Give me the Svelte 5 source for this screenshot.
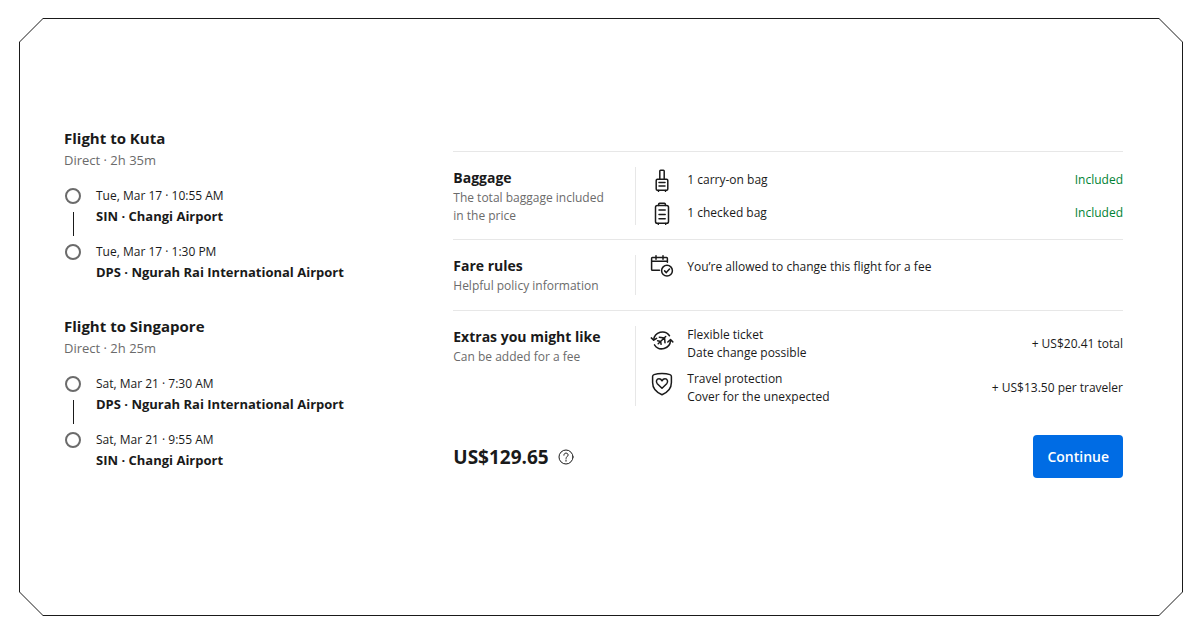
<script>
  const flights = [
    {
      title: 'Flight to Kuta',
      summary: 'Direct · 2h 35m',
      stops: [
        {time: 'Tue, Mar 17 · 10:55 AM', airport: 'SIN · Changi Airport'},
        {time: 'Tue, Mar 17 · 1:30 PM', airport: 'DPS · Ngurah Rai International Airport'}
      ]
    },
    {
      title: 'Flight to Singapore',
      summary: 'Direct · 2h 25m',
      stops: [
        {time: 'Sat, Mar 21 · 7:30 AM', airport: 'DPS · Ngurah Rai International Airport'},
        {time: 'Sat, Mar 21 · 9:55 AM', airport: 'SIN · Changi Airport'}
      ]
    }
  ];

  const sections = [
    {
      id: 'baggage',
      title: 'Baggage',
      text: 'The total baggage included in the price',
      rows: [
        {icon: 'carryon', lines: ['1 carry-on bag'], value: 'Included'},
        {icon: 'checked', lines: ['1 checked bag'], value: 'Included'}
      ]
    },
    {
      id: 'rules',
      title: 'Fare rules',
      text: 'Helpful policy information',
      rows: [
        {icon: 'calendar', lines: ['You’re allowed to change this flight for a fee']}
      ]
    },
    {
      id: 'extras',
      title: 'Extras you might like',
      text: 'Can be added for a fee',
      rows: [
        {icon: 'flexible', lines: ['Flexible ticket', 'Date change possible'], value: '+ US$20.41 total'},
        {icon: 'shield', lines: ['Travel protection', 'Cover for the unexpected'], value: '+ US$13.50 per traveler'}
      ]
    }
  ];
</script>

{#snippet icon(name)}
  <svg class="icon" viewBox="0 0 24 24" width="24" height="24" aria-hidden="true">
    {#if name === 'carryon'}
      <path d="M9.800 11V3q0-.8.8-.8h2.800q.8 0 .8.8v8" />
      <rect x="6.200" y="11.200" width="11.600" height="11" rx="1.200" />
      <path d="M9 14.500h6M9 18h6M8.500 22.500v.800M15.500 22.500v.800" />
    {:else if name === 'checked'}
      <path d="M8.700 4.500V3q0-.8.8-.8h5q.8 0 .8.8v1.500" />
      <rect x="5.500" y="4.500" width="13" height="17.700" rx="1.800" />
      <path d="M9 9h6.200M9 13.500h6.200M9 17.800h6.200M8.300 22.500v.800M15.700 22.500v.800" />
    {:else if name === 'calendar'}
      <path d="M9.500 15.300H2.400q-.8 0-.8-.8V3.400q0-.8.8-.8h14.200q.8 0 .8.8v3.800M1.600 6.200h15.800M6 .8v3.400M13 .8v3.400" />
      <circle cx="17" cy="15.700" r="5.400" />
      <path d="m14.600 15.900 1.700 1.700 3.200-3.600" />
    {:else if name === 'flexible'}
      <path d="M3.700 11.800A8.700 8.700 0 0 1 19.500 7.700M20.500 12.400A8.700 8.700 0 0 1 4.500 16.800" />
      <path d="m1.300 9.900 2.400 2.300 2.900-1.900M17.800 14l2.700-2.400 2.300 2.300" />
      <path d="m8.200 15.700 7.500-7.200M9.300 9.200l5.200.700M14.600 10l.400 4.800M7.600 12.800l3 .600M10.600 13.400l.500 2.900" />
    {:else}
      <path d="M12 1.500c3 0 5.800.4 8 1.100 1 .3 1.400.8 1.400 1.800v6.200c0 5.300-3.600 9.800-9.400 12.200-5.800-2.400-9.400-6.900-9.400-12.200V4.400c0-1 .4-1.500 1.400-1.800 2.200-.7 5-1.100 8-1.100z" />
      <path d="M12 16.200 7.300 11.700C5.500 9.700 6.600 6.800 9 6.800c1.400 0 2.400.8 3 2 .6-1.200 1.600-2 3-2 2.400 0 3.500 2.900 1.700 4.900z" />
    {/if}
  </svg>
{/snippet}

<main>
  <div class="frame">
    <div class="flights">
      {#each flights as flight}
        <section class="flight">
          <h2>{flight.title}</h2>
          <p>{flight.summary}</p>
          <ol>
            {#each flight.stops as stop, i}
              <li>
                <div class="marker">
                  <span class="dot"></span>
                  {#if i < flight.stops.length - 1}<span class="line"></span>{/if}
                </div>
                <div>
                  <div class="time">{stop.time}</div>
                  <div class="airport">{stop.airport}</div>
                </div>
              </li>
            {/each}
          </ol>
        </section>
      {/each}
    </div>

    <div class="details">
      {#each sections as section}
        <section class="section {section.id}">
          <div class="intro">
            <h3>{section.title}</h3>
            <p>{section.text}</p>
          </div>
          <ul>
            {#each section.rows as row}
              <li>
                {@render icon(row.icon)}
                <div class="label">
                  {#each row.lines as line}<div>{line}</div>{/each}
                </div>
                {#if row.value}<div class="value">{row.value}</div>{/if}
              </li>
            {/each}
          </ul>
        </section>
      {/each}

      <div class="footer">
        <strong>US$129.65</strong>
        <button class="help" aria-label="Price details">
          <svg viewBox="0 0 16 16" width="16" height="16" aria-hidden="true">
            <circle cx="8" cy="8" r="7" />
            <path d="M5.900 6.200c0-1.300.9-2.100 2.100-2.100s2.100.8 2.100 1.900c0 1.500-2.100 1.700-2.100 3.400M8 11v1.200" />
          </svg>
        </button>
        <button class="continue">Continue</button>
      </div>
    </div>
  </div>
</main>

<style>
  :global(body) {
    margin: 0;
    background: #fff;
  }

  main {
    display: flex;
    box-sizing: border-box;
    min-height: 100vh;
    padding: 18px 19px 19px 19px;
    font-family: "Segoe UI", "Open Sans", sans-serif;
    font-size: 12px;
    line-height: 18px;
    color: #1a1a1a;
  }

  h2, h3, p, ol, ul {
    margin: 0;
    padding: 0;
    list-style: none;
  }

  /* cut corners: dark shape with a white one laid inside it */
  .frame {
    --cut: 24px;
    position: relative;
    z-index: 0;
    flex: 1;
    display: grid;
    grid-template-columns: 6fr 11fr;
    column-gap: 24px;
    align-items: start;
    padding: 110px 60px 110px 45px;
    background: #1a1a1a;
  }

  .frame::before {
    --cut: 23px;
    content: '';
    position: absolute;
    inset: 1px;
    z-index: -1;
    background: #fff;
  }

  .frame, .frame::before {
    clip-path: polygon(
      var(--cut) 0, calc(100% - var(--cut)) 0,
      100% var(--cut), 100% calc(100% - var(--cut)),
      calc(100% - var(--cut)) 100%, var(--cut) 100%,
      0 calc(100% - var(--cut)), 0 var(--cut)
    );
  }

  .flights {
    display: grid;
    gap: 34px;
  }

  .flight h2 {
    margin-bottom: 2px;
    font-size: 15px;
    line-height: 20px;
  }

  .flight p {
    margin-bottom: 16px;
    font-size: 13px;
    line-height: 20px;
    color: #6b6b6b;
  }

  .flight ol {
    display: grid;
    gap: 16px;
  }

  .flight li {
    display: flex;
    gap: 15px;
    height: 40px;
    line-height: 20px;
  }

  .marker {
    display: flex;
    flex-direction: column;
    align-items: center;
    gap: 8px;
    padding: 2px 0 0 1px;
  }

  .dot {
    flex: none;
    box-sizing: border-box;
    width: 16px;
    height: 16px;
    border: 2px solid #6b6b6b;
    border-radius: 50%;
  }

  .line {
    flex: none;
    width: 1px;
    height: 24px;
    background: #1a1a1a;
  }

  .airport {
    font-size: 13px;
    font-weight: 700;
  }

  .details {
    padding-top: 23px;
  }

  .section {
    display: grid;
    grid-template-columns: 182px 1fr;
    padding: 15px 0;
    border-top: 1px solid #e7e7e7;
  }

  .baggage {
    padding-bottom: 14px;
  }

  .intro {
    padding-right: 20px;
  }

  .intro h3 {
    font-size: 14px;
    line-height: 22px;
  }

  .intro p {
    color: #6b6b6b;
  }

  .section ul {
    display: grid;
    align-content: start;
    gap: 8px;
    padding-left: 14px;
    border-left: 1px solid #e7e7e7;
  }

  .section li {
    display: flex;
    align-items: center;
    gap: 13px;
  }

  .baggage ul {
    gap: 9px;
    padding-top: 1px;
  }

  .icon {
    flex: none;
    fill: none;
    stroke: #1a1a1a;
    stroke-width: 1.5;
    stroke-linecap: round;
    stroke-linejoin: round;
  }

  .extras .icon {
    align-self: flex-start;
    margin-top: 2px;
  }

  .label {
    flex: 1;
  }

  .baggage .value {
    color: #008234;
  }

  .footer {
    display: flex;
    align-items: center;
    gap: 9px;
    margin-top: 14px;
  }

  .footer strong {
    font-size: 19px;
    line-height: 28px;
  }

  button {
    font: inherit;
    border: 0;
    cursor: pointer;
  }

  .help {
    display: flex;
    padding: 0;
    background: none;
  }

  .help svg {
    fill: none;
    stroke: #1a1a1a;
    stroke-width: 1;
    stroke-linecap: round;
  }

  .continue {
    margin-left: auto;
    padding: 12px 14px;
    font-size: 14px;
    line-height: 19px;
    font-weight: 600;
    color: #fff;
    background: #006ce4;
    border-radius: 4px;
  }
</style>
